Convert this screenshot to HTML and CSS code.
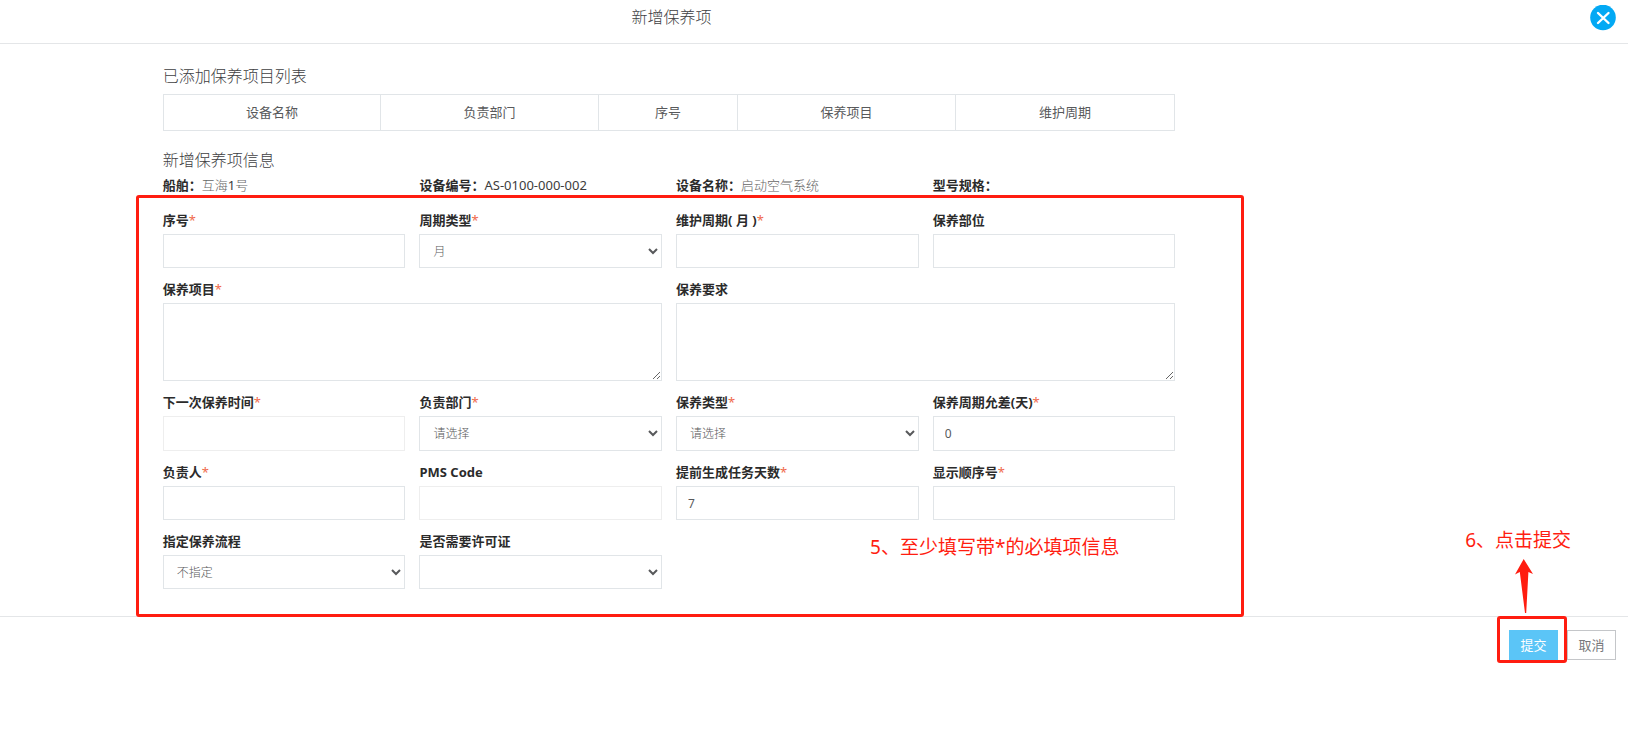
FILE: index.html
```html
<!DOCTYPE html>
<html lang="zh-CN">
<head>
<meta charset="utf-8">
<meta name="viewport" content="width=device-width, initial-scale=1">
<title>新增保养项</title>
<link rel="stylesheet" href="styles.css">
</head>
<body>
<header class="topbar">
  <h1 class="topbar-title">新增保养项</h1>
  <button class="close" type="button" aria-label="关闭">
    <svg viewBox="0 0 26 26" width="26" height="26" aria-hidden="true">
      <circle cx="13" cy="12.500" r="12.800" fill="#03a9f4"/>
      <path d="M8 8l10.500 10M18.500 8L8 18" stroke="#fff" stroke-width="2.400" stroke-linecap="round"/>
    </svg>
  </button>
</header>

<main class="content">
  <h2 class="heading">已添加保养项目列表</h2>
  <table class="items">
    <colgroup><col class="col-wide"><col class="col-wide"><col class="col-narrow"><col class="col-wide"><col></colgroup>
    <thead>
      <tr><th>设备名称</th><th>负责部门</th><th>序号</th><th>保养项目</th><th>维护周期</th></tr>
    </thead>
  </table>

  <h2 class="heading heading-second">新增保养项信息</h2>
  <div class="columns info">
    <div><b>船舶：</b><span class="muted">互海<span class="dark">1</span>号</span></div>
    <div><b>设备编号：</b><span class="dark">AS-0100-000-002</span></div>
    <div><b>设备名称：</b><span class="muted">启动空气系统</span></div>
    <div><b>型号规格：</b></div>
  </div>

  <form class="form-area" id="item-form">
    <div class="columns">
      <div class="field"><label for="no">序号<i>*</i></label><input id="no" type="text"></div>
      <div class="field"><label for="ctype">周期类型<i>*</i></label><select id="ctype"><option>月</option></select></div>
      <div class="field"><label for="cycle">维护周期( 月 )<i>*</i></label><input id="cycle" type="text"></div>
      <div class="field"><label for="part">保养部位</label><input id="part" type="text"></div>

      <div class="field field-wide"><label for="item">保养项目<i>*</i></label><textarea id="item"></textarea></div>
      <div class="field field-wide"><label for="req">保养要求</label><textarea id="req"></textarea></div>

      <div class="field field-tall"><label for="next">下一次保养时间<i>*</i></label><input class="pale" id="next" type="text"></div>
      <div class="field field-tall"><label for="dept">负责部门<i>*</i></label><select id="dept"><option>请选择</option></select></div>
      <div class="field field-tall"><label for="mtype">保养类型<i>*</i></label><select id="mtype"><option>请选择</option></select></div>
      <div class="field field-tall"><label for="tol">保养周期允差(天)<i>*</i></label><input id="tol" type="text" value="0"></div>

      <div class="field"><label for="owner">负责人<i>*</i></label><input id="owner" type="text"></div>
      <div class="field"><label for="pms">PMS Code</label><input class="pale" id="pms" type="text"></div>
      <div class="field"><label for="ahead">提前生成任务天数<i>*</i></label><input id="ahead" type="text" value="7"></div>
      <div class="field"><label for="order">显示顺序号<i>*</i></label><input id="order" type="text"></div>

      <div class="field"><label for="flow">指定保养流程</label><select id="flow"><option>不指定</option></select></div>
      <div class="field"><label for="permit">是否需要许可证</label><select id="permit"><option></option></select></div>
    </div>
    <div class="mark mark-form"></div>
    <p class="note note-form">5、至少填写带*的必填项信息</p>
  </form>
</main>

<footer class="actions">
  <div class="submit-wrap">
    <button class="btn btn-primary" type="submit" form="item-form">提交</button>
    <div class="mark mark-submit"></div>
    <div class="callout">
      <p class="note">6、点击提交</p>
      <svg class="arrow" viewBox="0 0 18 54" width="18" height="54" aria-hidden="true">
        <path d="M8.700 0L18 15L13.400 13L11.200 54H10L4.800 13L0 15.500Z" fill="#ff1d10"/>
      </svg>
    </div>
  </div>
  <button class="btn" type="button">取消</button>
</footer>
</body>
</html>
```
FILE: styles.css
```css
* {
  box-sizing: border-box;
}

body {
  margin: 0;
  background: #fff;
  color: #58595b;
  font-family: "Noto Sans", "Noto Sans CJK SC", sans-serif;
  font-size: 13px;
  line-height: 20px;
}

input, select, textarea, button {
  font-family: inherit;
  font-size: 12px;
}

.topbar {
  display: flex;
  justify-content: space-between;
  height: 44px;
  padding: 5px 12px 0 10%;
  border-bottom: 1px solid #e4e6e8;
}

.topbar-title {
  width: 70%;
  margin: 0;
  color: #404042;
  font-size: 16px;
  font-weight: 300;
  line-height: 24px;
  text-align: center;
}

.close {
  height: 26px;
  padding: 0;
  border: 0;
  background: none;
}

.close svg {
  display: block;
}

.content {
  width: 62.2%;
  margin-left: 10%;
  padding-top: 20px;
}

.heading {
  margin: 0 0 6px;
  color: #404042;
  font-size: 16px;
  font-weight: 300;
  line-height: 24px;
}

.heading-second {
  margin: 17px 0 3px;
}

.items {
  width: 100%;
  border-collapse: collapse;
  table-layout: fixed;
}

.items th {
  height: 36px;
  padding: 0 0 2px;
  border: 1px solid #e1e5e8;
  font-weight: 400;
}

.col-wide {
  width: 21.5%;
}

.col-narrow {
  width: 13.8%;
}

.columns {
  display: grid;
  grid-template-columns: repeat(4, minmax(0, 1fr));
  gap: 11px 14px;
}

.info b {
  color: #2b2b2b;
}

.muted {
  color: #666;
  font-weight: 300;
}

.dark {
  color: #3c3c3c;
  font-weight: 400;
}

.form-area {
  position: relative;
  padding: 15px 0 27px;
}

.field {
  display: flex;
  flex-direction: column;
  gap: 4px;
}

.field-wide {
  grid-column: span 2;
}

.field label {
  color: #2b2b2b;
  font-weight: 700;
}

.field label i {
  color: #f0694c;
  font-style: normal;
  font-weight: 400;
}

.field input,
.field select,
.field textarea {
  width: 100%;
  height: 34px;
  margin: 0;
  padding: 0 11px;
  border: 1px solid #e1e5e8;
  border-radius: 0;
  background: #fff;
  color: #58595b;
}

.field select {
  padding: 0 0 0 9px;
  color: #58595b;
  font-weight: 300;
}

.field-tall input,
.field-tall select {
  height: 35px;
}

.field textarea {
  height: 78px;
  padding: 6px 11px;
}

.field .pale {
  border-color: #eeeeee;
}

.mark {
  position: absolute;
  border: 3px solid #ff1d10;
  border-radius: 3px;
  pointer-events: none;
}

.mark-form {
  inset: 0 -69px -1px -27px;
}

.note {
  margin: 0;
  color: #ff1d10;
  font-size: 19px;
  line-height: 28px;
  white-space: nowrap;
}

.note-form {
  position: absolute;
  right: 56px;
  bottom: 55px;
}

.actions {
  display: flex;
  justify-content: flex-end;
  gap: 9px;
  padding: 13px 12px;
  border-top: 1px solid #e4e6e8;
}

.submit-wrap {
  position: relative;
}

.mark-submit {
  inset: -14px -9px -3px -12px;
}

.callout {
  position: absolute;
  right: -13px;
  bottom: 47px;
  display: flex;
  flex-direction: column;
  gap: 5px;
}

.arrow {
  margin-left: 50px;
}

.btn {
  width: 49px;
  height: 30px;
  padding: 0 0 2px;
  border: 1px solid #c4c6c9;
  border-radius: 0;
  background: #fff;
  color: #77787b;
  font-size: 13px;
}

.btn-primary {
  border-color: #5bc5f7;
  background: #5bc5f7;
  color: #fff;
}
```
